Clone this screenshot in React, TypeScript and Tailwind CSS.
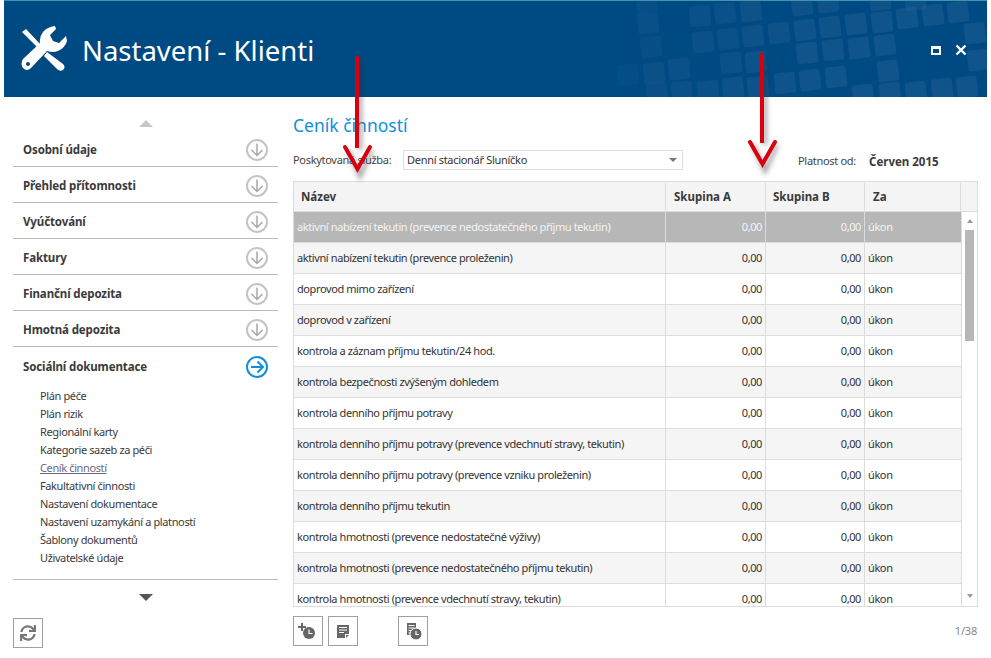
import { FaSync } from "react-icons/fa";

const FONT = "font-['Noto_Sans','Liberation_Sans',sans-serif]";

const MENU_TOP = [
  "Osobní údaje",
  "Přehled přítomnosti",
  "Vyúčtování",
  "Faktury",
  "Finanční depozita",
  "Hmotná depozita",
];

const SUB_ITEMS = [
  "Plán péče",
  "Plán rizik",
  "Regionální karty",
  "Kategorie sazeb za péči",
  "Ceník činností",
  "Fakultativní činnosti",
  "Nastavení dokumentace",
  "Nastavení uzamykání a platností",
  "Šablony dokumentů",
  "Uživatelské údaje",
];

const ROWS = [
  "aktivní nabízení tekutin (prevence nedostatečného příjmu tekutin)",
  "aktivní nabízení tekutin (prevence proleženin)",
  "doprovod mimo zařízení",
  "doprovod v zařízení",
  "kontrola a záznam příjmu tekutin/24 hod.",
  "kontrola bezpečnosti zvýšeným dohledem",
  "kontrola denního příjmu potravy",
  "kontrola denního příjmu potravy (prevence vdechnutí stravy, tekutin)",
  "kontrola denního příjmu potravy (prevence vzniku proleženin)",
  "kontrola denního příjmu tekutin",
  "kontrola hmotnosti (prevence nedostatečné výživy)",
  "kontrola hmotnosti (prevence nedostatečného příjmu tekutin)",
  "kontrola hmotnosti (prevence vdechnutí stravy, tekutin)",
];

// header background squares: centre x, centre y, opacity
const SQUARES: [number, number, number][] = [
  [647, 2, 0.03], [648, 23, 0.035], [651, 47, 0.03], [654, 73, 0.04], [628, 75, 0.02], [679, 69, 0.045],
  [657, 93, 0.035], [682, 92, 0.045], [708, 91, 0.045], [733, 88, 0.05], [758, 87, 0.05], [785, 83, 0.055],
  [810, 80, 0.06], [836, 77, 0.06], [888, 71, 0.06], [863, 95, 0.06], [890, 93, 0.06], [916, 92, 0.06],
  [942, 89, 0.06], [967, 87, 0.06], [978, 60, 0.06], [975, 33, 0.06], [700, 16, 0.045], [725, 13, 0.045],
  [751, 11, 0.05], [703, 42, 0.045], [728, 39, 0.045], [753, 36, 0.05], [779, 33, 0.05], [805, 30, 0.055],
  [830, 27, 0.055], [856, 24, 0.06], [882, 22, 0.06], [907, 18, 0.06], [933, 15, 0.06], [958, 12, 0.06],
  [731, 63, 0.045], [756, 62, 0.05], [807, 53, 0.06], [833, 50, 0.06], [859, 48, 0.06], [885, 45, 0.06],
  [802, 5, 0.05], [828, 2, 0.05], [880, 0, 0.05], [915, 0, 0.05],
];

function HeaderPattern() {
  return (
    <svg className="absolute left-0 top-0" width="983" height="96" viewBox="4 1 983 96">
      {SQUARES.map(([x, y, o]) => (
        <rect
          key={`${x}-${y}`}
          x={x - 10.5}
          y={y - 10.5}
          width="21"
          height="21"
          rx="2.5"
          fill="#fff"
          fillOpacity={o}
          transform={`rotate(-6 ${x} ${y})`}
        />
      ))}
    </svg>
  );
}

function ToolsIcon() {
  return (
    <svg width="48" height="48" viewBox="0 0 48 48" className="shrink-0">
      {/* screwdriver */}
      <path d="M1 7 L5 4 L20 20 L17 23 Z" fill="#fff" />
      <path d="M26 27 L42 39 Q45 42 42 45 Q39 47 36 44 L23 31 Z" fill="#fff" />
      {/* wrench */}
      <path
        d="M34 1 Q26 2 22 7 Q18 12 19 18 L2 34 Q-1 39 2 43 Q6 47 10 43 L26 26 Q32 28 37 26 Q44 23 46 16 L45 11 L38 18 L32 16 L29 10 L35 4 Z"
        fill="#fff"
      />
      <circle cx="7" cy="39" r="2" fill="#004a84" />
    </svg>
  );
}

function CircleArrow({ active }: { active?: boolean }) {
  if (active) {
    return (
      <svg width="24" height="24" viewBox="0 0 24 24">
        <circle cx="12" cy="12" r="10" fill="none" stroke="#0f8fdc" strokeWidth="2" />
        <path d="M6 12 H17.5 M12.5 6.5 L18 12 L12.5 17.5" fill="none" stroke="#0f8fdc" strokeWidth="2" />
      </svg>
    );
  }
  return (
    <svg width="24" height="24" viewBox="0 0 24 24">
      <circle cx="12" cy="12" r="10" fill="none" stroke="#c4c4c4" strokeWidth="2" />
      <path d="M12 5.5 V17.5 M6.5 12 L12 17.5 L17.5 12" fill="none" stroke="#a8a8a8" strokeWidth="1.5" />
    </svg>
  );
}

function AddClockIcon() {
  return (
    <svg width="20" height="20" viewBox="0 0 20 20">
      <path d="M3 2 h2 v3 h3 v2 h-3 v3 h-2 v-3 h-3 v-2 h3 Z" fill="#666" />
      <circle cx="11" cy="12" r="6" fill="#666" />
      <path d="M11 8.5 V12.5 H14.5" fill="none" stroke="#fff" strokeWidth="1.2" />
    </svg>
  );
}

function NoteIcon() {
  return (
    <svg width="12" height="13" viewBox="0 0 12 13">
      <path d="M0 0 H12 V9 H8 V13 H0 Z" fill="#666" />
      <path d="M9 10 H12 L9 13 Z" fill="#666" />
      <path d="M2 2.5 H10 M2 5 H10 M2 7.5 H7" stroke="#fff" strokeWidth="1" />
    </svg>
  );
}

function NoteClockIcon() {
  return (
    <svg width="20" height="20" viewBox="0 0 20 20">
      <path d="M4 2 H13 V8 H9 V14 H4 Z" fill="#666" />
      <path d="M5.5 4.5 H11.5 M5.5 7 H11.5 M5.5 9.5 H8 M5.5 12 H8" stroke="#fff" strokeWidth="1" />
      <circle cx="13" cy="13" r="6" fill="#666" stroke="#fff" strokeWidth="1" />
      <path d="M13 10 V13.5 H16" fill="none" stroke="#fff" strokeWidth="1.2" />
    </svg>
  );
}

function RedArrow({ className, tip }: { className: string; tip: number }) {
  const wing = tip - 26;
  return (
    <svg className={className} width="44" height={tip + 12} viewBox={`-2 0 44 ${tip + 12}`}>
      <defs>
        <filter id={`sh${tip}`} x="-50%" y="-10%" width="200%" height="120%">
          <feGaussianBlur stdDeviation="2.5" />
        </filter>
      </defs>
      <g filter={`url(#sh${tip})`} opacity="0.45" transform="translate(3 4)">
        <path d={`M20 2 V${wing}`} stroke="#333" strokeWidth="4" fill="none" />
        <path d={`M8 ${wing} L20 ${tip} L32 ${wing}`} stroke="#333" strokeWidth="4" fill="none" />
      </g>
      <path d={`M20 0 V${wing + 2}`} stroke="#d8000f" strokeWidth="4" fill="none" />
      <path
        d={`M8 ${wing + 1} L20.5 ${tip - 3} L33 ${wing + 1}`}
        stroke="#d8000f"
        strokeWidth="4"
        strokeLinecap="round"
        fill="none"
      />
    </svg>
  );
}

function IconButton({ children, className = "" }: { children: React.ReactNode; className?: string }) {
  return (
    <button className={`flex h-[30px] w-[30px] items-center justify-center border border-[#a0a0a0] bg-white ${className}`}>
      {children}
    </button>
  );
}

export default function App() {
  return (
    <div className={`relative h-[658px] w-[991px] overflow-hidden bg-white text-[#333] ${FONT}`}>
      {/* Title bar */}
      <div className="ml-[4px] mr-[4px] border-t border-[#3a97ad]">
        <header className="relative flex h-[96px] items-center overflow-hidden bg-[#004a84] pl-[17px]">
          <HeaderPattern />
          <div className="relative flex items-center gap-[13px]">
            <ToolsIcon />
            <h1 className="pt-[3px] text-[27.5px] leading-none text-white">Nastavení - Klienti</h1>
          </div>
          <div className="absolute right-[20px] top-[43px] flex items-center gap-[14px]">
            <span className="block h-[9px] w-[10px] border-2 border-t-[3px] border-white" />
            <svg width="12" height="12" viewBox="0 0 12 12">
              <path d="M1.5 1.5 L10.5 10.5 M10.5 1.5 L1.5 10.5" stroke="#fff" strokeWidth="2.4" />
            </svg>
          </div>
        </header>
      </div>

      <div className="flex pl-[13px]">
        {/* Sidebar */}
        <aside className="flex h-[561px] w-[265px] shrink-0 flex-col">
          <div className="flex h-[34px] items-end justify-center pb-[4px] pt-[22px]">
            <span className="h-0 w-0 border-x-[7px] border-b-[7px] border-x-transparent border-b-[#c8c8c8]" />
          </div>
          {MENU_TOP.map((m) => (
            <div key={m} className="flex h-[36px] items-center justify-between border-b border-[#b8b8b8] pl-[10px] pr-[9px] pt-[3px]">
              <span className="text-[11.5px] font-bold tracking-[-0.12px] text-[#3a3a3a]">{m}</span>
              <CircleArrow />
            </div>
          ))}
          <div className="flex h-[36px] items-center justify-between pl-[10px] pr-[9px] pt-[3px]">
            <span className="text-[11.5px] font-bold tracking-[-0.12px] text-[#3a3a3a]">Sociální dokumentace</span>
            <CircleArrow active />
          </div>
          <ul className="border-b border-[#b8b8b8] pb-[12px] pl-[27px] pt-[4px]">
            {SUB_ITEMS.map((s) => (
              <li
                key={s}
                className={
                  s === "Ceník činností"
                    ? "h-[18px] text-[11px] leading-[18px] tracking-[-0.38px] text-[#6a6a80] underline"
                    : "h-[18px] text-[11px] leading-[18px] tracking-[-0.38px] text-[#3a3a3a]"
                }
              >
                {s}
              </li>
            ))}
          </ul>
          <div className="flex justify-center pt-[14px]">
            <span className="h-0 w-0 border-x-[7px] border-t-[7px] border-x-transparent border-t-[#555]" />
          </div>
          <div className="mt-[17px]">
            <IconButton>
              <FaSync size={16} color="#777" />
            </IconButton>
          </div>
        </aside>

        {/* Content */}
        <main className="ml-[15px] flex w-[685px] flex-col">
          <h2 className="mt-[15px] h-[26px] text-[17.5px] leading-[26px] text-[#0f8fdc]">Ceník činností</h2>
          <div className="mt-[11px] flex h-[22px] items-center">
            <span className="w-[110px] text-[11px] tracking-[-0.3px] text-[#444]">Poskytovaná služba:</span>
            <div className="flex h-[20px] w-[280px] items-center justify-between border border-[#dcdcdc] pl-[3px] pr-[5px] text-[11px] tracking-[-0.3px]">
              <span className="pt-[1px]">Denní stacionář Sluníčko</span>
              <span className="h-0 w-0 border-x-[4px] border-t-[4px] border-x-transparent border-t-[#777]" />
            </div>
            <span className="ml-[115px] w-[56px] whitespace-nowrap pt-[2px] text-[11px] tracking-[-0.3px] text-[#444]">Platnost od:</span>
            <span className="ml-[15px] pt-[3px] text-[11.5px] font-bold text-[#3a3a3a]">Červen 2015</span>
          </div>

          {/* Table */}
          <div className="mt-[10px] h-[426px] overflow-hidden border border-[#dcdcdc]">
            <div className="flex h-[30px] border-b border-[#dcdcdc] bg-[#f4f4f4] pt-[1px] text-[11.5px] font-bold text-[#3a3a3a]">
              <div className="flex w-[372px] items-center border-r border-[#dcdcdc] pl-[7px]">Název</div>
              <div className="flex w-[100px] items-center border-r border-[#dcdcdc] pl-[8px]">Skupina A</div>
              <div className="flex w-[99px] items-center border-r border-[#dcdcdc] pl-[7px]">Skupina B</div>
              <div className="flex w-[96px] items-center border-r border-[#dcdcdc] pl-[8px]">Za</div>
              <div className="flex-1" />
            </div>
            <div className="flex">
              <div className="w-[667px] shrink-0">
                {ROWS.map((r, i) => {
                  const bg = i === 0 ? "bg-[#b7b7b7] text-[#f4f4f4]" : i % 2 === 1 ? "bg-[#f5f5f5]" : "bg-white";
                  return (
                    <div key={r} className={`flex h-[31px] border-b border-[#dcdcdc] text-[11px] tracking-[-0.4px] ${bg}`}>
                      <div className="flex w-[372px] items-center overflow-hidden whitespace-nowrap border-r border-[#dcdcdc] pl-[3px]">{r}</div>
                      <div className="flex w-[100px] items-center justify-end border-r border-[#dcdcdc] pr-[3px]">0,00</div>
                      <div className="flex w-[99px] items-center justify-end border-r border-[#dcdcdc] pr-[3px]">0,00</div>
                      <div className="flex w-[96px] items-center pl-[3px]">úkon</div>
                    </div>
                  );
                })}
              </div>
              {/* Scrollbar */}
              <div className="flex h-[395px] flex-1 flex-col items-center border-l border-[#dcdcdc] pt-[7px]">
                <span className="h-0 w-0 border-x-[3.5px] border-b-[4px] border-x-transparent border-b-[#999]" />
                <span className="mt-[7px] h-[111px] w-[9px] bg-[#b7b7b7]" />
                <span className="mt-[253px] h-0 w-0 border-x-[3.5px] border-t-[4px] border-x-transparent border-t-[#999]" />
              </div>
            </div>
          </div>

          {/* Toolbar */}
          <div className="mt-[9px] flex items-center">
            <IconButton>
              <AddClockIcon />
            </IconButton>
            <IconButton className="ml-[5px]">
              <NoteIcon />
            </IconButton>
            <IconButton className="ml-[40px]">
              <NoteClockIcon />
            </IconButton>
            <span className="ml-auto pr-[1px] text-[11px] tracking-[-0.2px] text-[#888]">1/38</span>
          </div>
        </main>
      </div>

      {/* Annotation arrows */}
      <RedArrow className="absolute left-[335px] top-[56px]" tip={116} />
      <RedArrow className="absolute left-[740px] top-[53px]" tip={114} />
    </div>
  );
}
